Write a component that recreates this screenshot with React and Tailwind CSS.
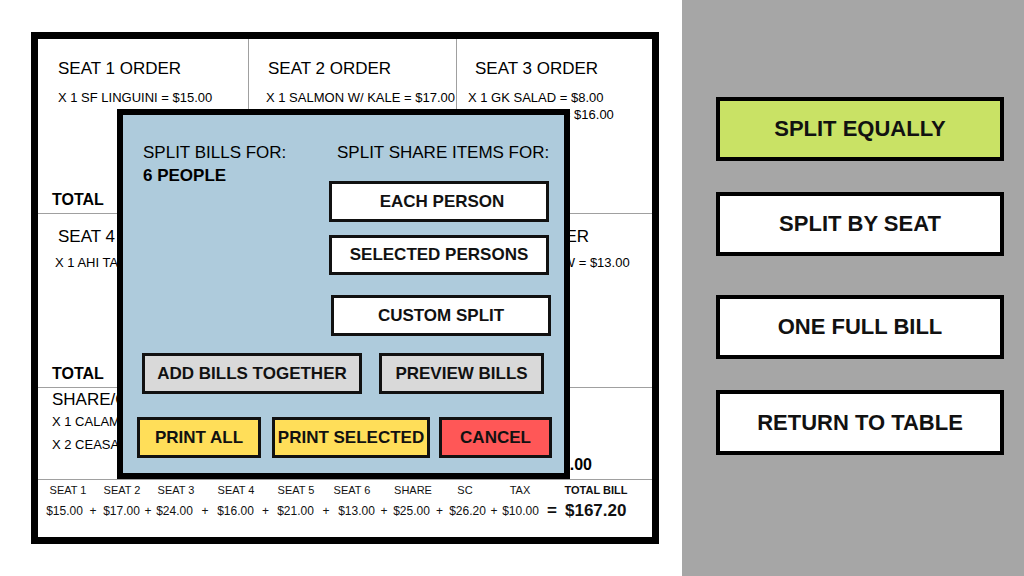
import React from "react";

function ModalBtn({ className = "", children }) {
  return (
    <div
      className={
        "flex items-center justify-center border-[3px] border-[#111] text-[17px] font-bold leading-[20px] whitespace-nowrap text-[#111] " +
        className
      }
    >
      {children}
    </div>
  );
}

function SideBtn({ className = "", children }) {
  return (
    <div
      className={
        "flex w-[288px] items-center justify-center border-4 border-black text-[22px] font-bold leading-[26px] whitespace-nowrap text-[#111] " +
        className
      }
    >
      {children}
    </div>
  );
}

const labels = [
  ["SEAT 1", "w-[60px]"],
  ["SEAT 2", "w-[48px]"],
  ["SEAT 3", "w-[60px]"],
  ["SEAT 4", "w-[60px]"],
  ["SEAT 5", "w-[60px]"],
  ["SEAT 6", "w-[52px]"],
  ["SHARE", "w-[70px]"],
  ["SC", "w-[34px]"],
  ["TAX", "w-[76px]"],
];

export default function App() {
  return (
    <div className="flex h-[576px] w-[1024px] overflow-hidden bg-white font-['Liberation_Sans',Arial,sans-serif] text-black">
      {/* Left area */}
      <div className="w-[682px] pl-[31px] pt-[32px]">
        <div className="relative flex h-[512px] w-[628px] flex-col border-[7px] border-black">
          {/* Row 1 */}
          <div className="flex h-[175px] border-b border-[#a0a0a0]">
            <div className="flex w-[211px] flex-col border-r border-[#a0a0a0] pt-[20px] pb-[3px]">
              <div className="ml-[20px] text-[17px] leading-[20px] whitespace-nowrap">SEAT 1 ORDER</div>
              <div className="ml-[20px] mt-[10px] text-[13px] leading-[17px] whitespace-nowrap">X 1 SF LINGUINI = $15.00</div>
              <div className="mt-auto ml-[14px] text-[16px] font-bold leading-[20px]">TOTAL</div>
            </div>
            <div className="flex w-[208px] flex-col border-r border-[#a0a0a0] pt-[20px] pb-[3px]">
              <div className="ml-[19px] text-[17px] leading-[20px] whitespace-nowrap">SEAT 2 ORDER</div>
              <div className="ml-[17px] mt-[10px] text-[13px] leading-[17px] whitespace-nowrap">X 1 SALMON W/ KALE = $17.00</div>
            </div>
            <div className="flex flex-1 flex-col pt-[20px] pb-[3px]">
              <div className="ml-[18px] text-[17px] leading-[20px] whitespace-nowrap">SEAT 3 ORDER</div>
              <div className="ml-[11px] mt-[10px] text-[13px] leading-[17px] whitespace-nowrap">X 1 GK SALAD = $8.00</div>
              <div className="ml-[11px] text-[13px] leading-[17px] whitespace-nowrap">X 2 FISH TACO = $16.00</div>
            </div>
          </div>

          {/* Row 2 */}
          <div className="flex h-[174px] border-b border-[#a0a0a0]">
            <div className="flex w-[211px] flex-col border-r border-[#a0a0a0] pt-[13px] pb-[3px]">
              <div className="ml-[20px] text-[17px] leading-[20px] whitespace-nowrap">SEAT 4 ORDER</div>
              <div className="ml-[17px] mt-[7px] text-[13px] leading-[17px] whitespace-nowrap">X 1 AHI TACOS = $16.00</div>
              <div className="mt-auto ml-[14px] text-[16px] font-bold leading-[20px]">TOTAL</div>
            </div>
            <div className="w-[208px] border-r border-[#a0a0a0]" />
            <div className="flex flex-1 flex-col pt-[13px] pb-[3px]">
              <div className="ml-[9px] text-[17px] leading-[20px] whitespace-nowrap">SEAT 6 ORDER</div>
              <div className="ml-[9px] mt-[7px] text-[13px] leading-[17px] whitespace-nowrap">X 1 BEEF SANDW = $13.00</div>
            </div>
          </div>

          {/* Share row */}
          <div className="flex h-[92px] border-b border-[#a0a0a0] pt-[2px] pb-[4px]">
            <div className="flex flex-col pl-[14px]">
              <div className="text-[17px] leading-[20px] whitespace-nowrap">SHARE/GROUP ORDER</div>
              <div className="text-[13px] leading-[23px] whitespace-nowrap">X 1 CALAMARI = $9.00</div>
              <div className="text-[13px] leading-[23px] whitespace-nowrap">X 2 CEASAR SALAD = $16.00</div>
            </div>
            <div className="ml-auto mr-[60px] self-end text-[16px] font-bold leading-[20px]">$25.00</div>
          </div>

          {/* Totals */}
          <div className="flex flex-1 flex-col pt-[3px]">
            <div className="flex text-[11px] leading-[14px] text-[#111]">
              {labels.map(([t, w]) => (
                <div key={t} className={"text-center whitespace-nowrap " + w}>
                  {t}
                </div>
              ))}
              <div className="w-[76px] text-center font-bold whitespace-nowrap">TOTAL BILL</div>
            </div>
            <div className="mt-[4px] flex items-center pl-[8px] text-[12px] leading-[16px] text-[#111]">
              <div className="w-[37px] text-center">$15.00</div>
              <div className="w-[20px] text-center">+</div>
              <div className="w-[37px] text-center">$17.00</div>
              <div className="w-[16px] text-center">+</div>
              <div className="w-[37px] text-center">$24.00</div>
              <div className="w-[24px] text-center">+</div>
              <div className="w-[37px] text-center">$16.00</div>
              <div className="w-[23px] text-center">+</div>
              <div className="w-[37px] text-center">$21.00</div>
              <div className="w-[24px] text-center">+</div>
              <div className="w-[37px] text-center">$13.00</div>
              <div className="w-[18px] text-center">+</div>
              <div className="w-[37px] text-center">$25.00</div>
              <div className="w-[19px] text-center">+</div>
              <div className="w-[37px] text-center">$26.20</div>
              <div className="w-[16px] text-center">+</div>
              <div className="w-[37px] text-center">$10.00</div>
              <div className="w-[26px] text-center text-[17px] font-bold leading-[20px]">=</div>
              <div className="text-[17px] font-bold leading-[20px] whitespace-nowrap">$167.20</div>
            </div>
          </div>

          {/* Modal */}
          <div className="absolute left-[79px] top-[70px] flex h-[370px] w-[453px] flex-col border-[6px] border-black bg-[#aecbdc]">
            <div className="flex pt-[28px]">
              <div className="w-[206px] pl-[20px]">
                <div className="text-[17px] leading-[20px] whitespace-nowrap">SPLIT BILLS FOR:</div>
                <div className="mt-[3px] text-[17px] font-bold leading-[20px] whitespace-nowrap">6 PEOPLE</div>
              </div>
              <div className="flex w-[222px] flex-col">
                <div className="ml-[8px] text-[17px] leading-[20px] whitespace-nowrap">SPLIT SHARE ITEMS FOR:</div>
                <ModalBtn className="mt-[18px] h-[41px] w-[220px] bg-white pl-[6px]">EACH PERSON</ModalBtn>
                <ModalBtn className="mt-[13px] h-[40px] w-[220px] bg-white">SELECTED PERSONS</ModalBtn>
                <ModalBtn className="ml-[2px] mt-[20px] h-[41px] w-[220px] bg-white">CUSTOM SPLIT</ModalBtn>
              </div>
            </div>
            <div className="mt-[17px] flex pl-[19px]">
              <ModalBtn className="h-[41px] w-[220px] bg-[#d9d9d9]">ADD BILLS TOGETHER</ModalBtn>
              <ModalBtn className="ml-[17px] h-[41px] w-[165px] bg-[#d9d9d9]">PREVIEW BILLS</ModalBtn>
            </div>
            <div className="mt-[23px] flex pl-[14px]">
              <ModalBtn className="h-[41px] w-[124px] bg-[#ffde59]">PRINT ALL</ModalBtn>
              <ModalBtn className="ml-[11px] h-[41px] w-[158px] bg-[#ffde59]">PRINT SELECTED</ModalBtn>
              <ModalBtn className="ml-[9px] h-[41px] w-[113px] bg-[#ff5757]">CANCEL</ModalBtn>
            </div>
          </div>
        </div>
      </div>

      {/* Right panel */}
      <div className="flex flex-1 flex-col bg-[#a6a6a6] pl-[34px] pt-[97px]">
        <SideBtn className="h-[64px] bg-[#c9e265]">SPLIT EQUALLY</SideBtn>
        <SideBtn className="mt-[31px] h-[64px] bg-white">SPLIT BY SEAT</SideBtn>
        <SideBtn className="mt-[39px] h-[64px] bg-white">ONE FULL BILL</SideBtn>
        <SideBtn className="mt-[31px] h-[65px] bg-white">RETURN TO TABLE</SideBtn>
      </div>
    </div>
  );
}
